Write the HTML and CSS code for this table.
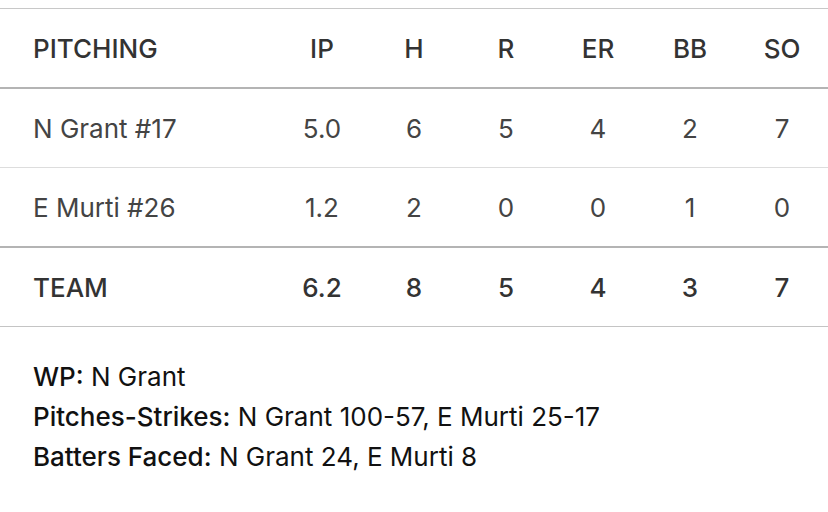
FILE: index.html
```html
<!DOCTYPE html>
<html>
<head>
<meta charset="utf-8">
<link rel="stylesheet" href="styles.css">
</head>
<body>
<div class="page">
  <table class="box">
    <thead>
      <tr class="head">
        <th class="name">PITCHING</th><th>IP</th><th>H</th><th>R</th><th>ER</th><th>BB</th><th>SO</th>
      </tr>
    </thead>
    <tbody>
      <tr class="row">
        <td class="name">N Grant #17</td><td>5.0</td><td>6</td><td>5</td><td>4</td><td>2</td><td>7</td>
      </tr>
      <tr class="row last">
        <td class="name">E Murti #26</td><td>1.2</td><td>2</td><td>0</td><td>0</td><td>1</td><td>0</td>
      </tr>
      <tr class="team">
        <td class="name">TEAM</td><td>6.2</td><td>8</td><td>5</td><td>4</td><td>3</td><td>7</td>
      </tr>
    </tbody>
  </table>
  <div class="notes">
    <p><span class="lbl">WP:</span> N Grant</p>
    <p><span class="lbl">Pitches-Strikes:</span> N Grant 100-57, E Murti 25-17</p>
    <p><span class="lbl">Batters Faced:</span> N Grant 24, E Murti 8</p>
  </div>
</div>
</body>
</html>
```

FILE: styles.css
```css
html, body {
  margin: 0;
  padding: 0;
  background: #ffffff;
}
body {
  font-family: Inter, "Noto Sans", sans-serif;
}
.page {
  padding-top: 8px;
}
.box {
  width: 100%;
  border-collapse: collapse;
  table-layout: fixed;
  border-top: 1px solid #c8c8c8;
}
.box th, .box td {
  height: 78px;
  padding: 0;
  text-align: center;
  width: 92px;
  font-size: 26px;
}
.box .name {
  width: auto;
  text-align: left;
  padding-left: 33px;
}
.head th {
  font-weight: 500;
  color: #333333;
  border-bottom: 2px solid #b4b4b4;
}
.row td {
  font-weight: 400;
  color: #444444;
  border-bottom: 1px solid #dddddd;
}
.row.last td {
  border-bottom: 2px solid #b4b4b4;
}
.team td {
  font-weight: 500;
  color: #333333;
  border-bottom: 1px solid #c4c4c4;
}
.notes {
  padding: 30px 33px 0;
}
.notes p {
  margin: 0;
  font-size: 26px;
  line-height: 40px;
  color: #111111;
}
.lbl {
  font-weight: 500;
}
```
